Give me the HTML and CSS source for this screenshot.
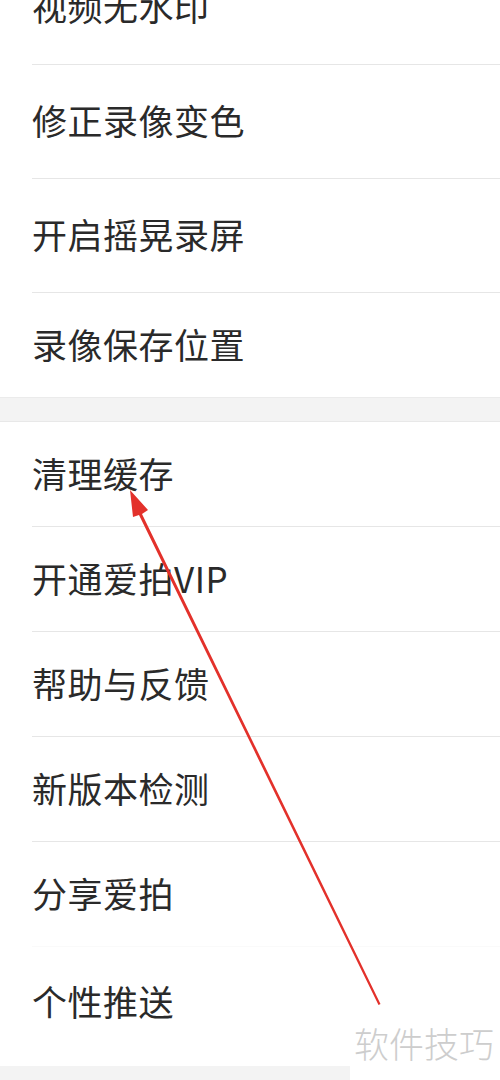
FILE: index.html
```html
<!DOCTYPE html>
<html>
<head>
    <title>设置</title>
    <link rel="stylesheet" href="styles.css">
</head>
<body>
    <div class="page">
        <!-- Recording settings -->
        <div class="group group-first">
            <div class="row">视频无水印</div>
            <div class="row">修正录像变色</div>
            <div class="row">开启摇晃录屏</div>
            <div class="row last">录像保存位置</div>
        </div>

        <div class="gap"></div>

        <!-- General settings -->
        <div class="group group-second">
            <div class="row">清理缓存</div>
            <div class="row">开通爱拍VIP</div>
            <div class="row">帮助与反馈</div>
            <div class="row">新版本检测</div>
            <div class="row no-line">分享爱拍</div>
            <div class="row last">个性推送</div>
        </div>

        <div class="footer">
            <div class="footer-gray"></div>
            <div class="watermark">软件技巧</div>
        </div>

        <!-- Red arrow drawn over the list -->
        <svg class="arrow" width="500" height="1080" viewBox="0 0 500 1080">
            <polygon points="378.5,1005 380.5,1004 142,514 148,510 130,490 133,517 139,515" fill="#e3312b"/>
        </svg>
    </div>
</body>
</html>
```

FILE: styles.css
```css
body {
    margin: 0;
    background: #fff;
    font-family: "Noto Sans CJK SC", "Noto Sans", sans-serif;
    color: #2a2a2a;
}

.page {
    position: relative;
    width: 500px;
    height: 1080px;
    overflow: hidden;
}

/* List groups */
.group {
    background: #fff;
}

.group-first {
    margin-top: -49px;
}

.row {
    display: flex;
    align-items: center;
    box-sizing: border-box;
    padding-bottom: 4px;
    margin-left: 32px;
    font-size: 35px;
    letter-spacing: 0.5px;
    border-bottom: 1px solid #e6e6e6;
}

.group-first .row {
    height: 114px;
}

.group-second .row {
    height: 105px;
}

.row.no-line {
    border-bottom-color: #fafafa;
}

.row.last {
    border-bottom: none;
}

.group-first .row.last {
    height: 104px;
}

.group-second .row.last {
    height: 111px;
}

/* Grey band between groups */
.gap {
    height: 23px;
    background: #f3f3f3;
    border-top: 1px solid #ebebeb;
    border-bottom: 1px solid #e8e8e8;
}

/* Bottom strip with watermark */
.footer {
    display: flex;
    height: 30px;
}

.footer-gray {
    width: 350px;
    margin-top: 8px;
    background: #f3f3f3;
}

.watermark {
    flex: 1;
    background: #fff;
    font-size: 35px;
    font-weight: 300;
    color: #cdcdcd;
    line-height: 1;
    padding-left: 4px;
    margin-top: -45px;
    padding-top: 12px;
    height: 65px;
}

.arrow {
    position: absolute;
    left: 0;
    top: 0;
}
```
